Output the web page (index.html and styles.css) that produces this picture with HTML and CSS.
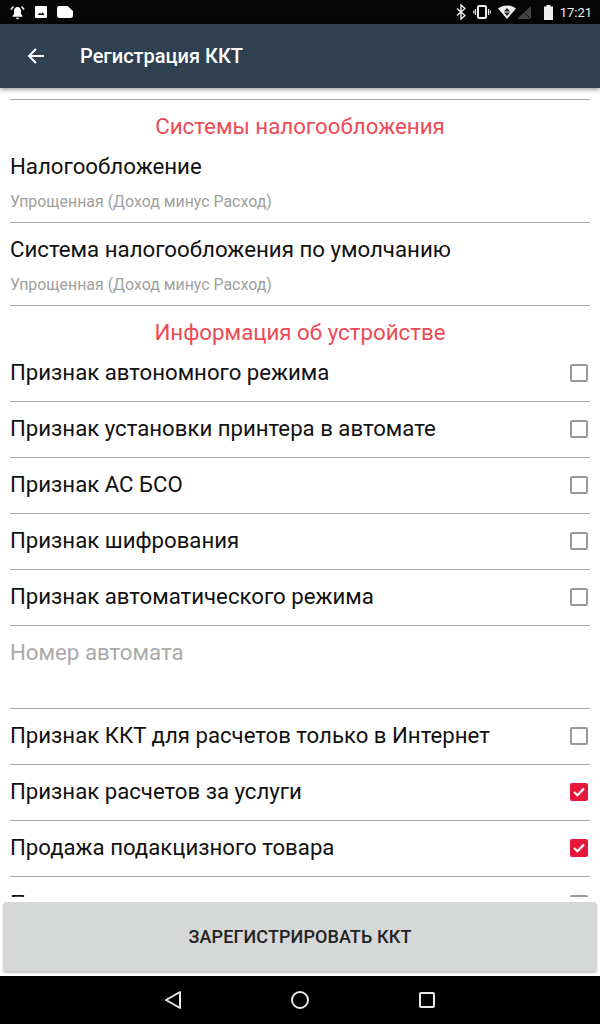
FILE: index.html
```html
<!DOCTYPE html>
<html lang="ru">
<head>
    <meta charset="UTF-8">
    <meta name="viewport" content="width=device-width, initial-scale=1.0">
    <title>Регистрация ККТ</title>
    <link rel="stylesheet" href="styles.css">
</head>
<body>
    <div class="status-bar">
        <div class="status-icons left">
            <svg width="15" height="15" viewBox="0 0 15 15"><path d="M7.500 2C5.200 2 4 3.800 4 5.800V9l-1.500 2v.7h10V11L11 9V5.800C11 3.800 9.800 2 7.500 2z" fill="#fff"/><path d="M6 12.800h3a1.500 1.500 0 0 1-3 0z" fill="#fff"/><path d="M.8 4.500L3.500 1.500M14.200 4.500L11.500 1.500" stroke="#fff" stroke-width="1.400"/></svg>
            <svg width="12" height="12" viewBox="0 0 12 12"><path d="M1 0h10a1 1 0 0 1 1 1v10a1 1 0 0 1-1 1H1a1 1 0 0 1-1-1V1a1 1 0 0 1 1-1zm1.500 9h7L7.700 6.200 6.200 8 5 6.800z" fill="#fff" fill-rule="evenodd"/></svg>
            <svg width="16" height="12" viewBox="0 0 16 12"><path d="M2 0h8.500L16 5v4.500A2.500 2.500 0 0 1 13.500 12H3a3 3 0 0 1-3-3V2a2 2 0 0 1 2-2z" fill="#fff"/></svg>
        </div>
        <div class="status-icons">
            <svg class="bt" width="10" height="16" viewBox="0 0 10 16"><path d="M1 4.500l8 7L5 15V1l4 3.500-8 7" fill="none" stroke="#eee" stroke-width="1.400"/></svg>
            <svg class="vibrate" width="18" height="14" viewBox="0 0 18 14"><rect x="5" y="1" width="8" height="12" rx="1" fill="none" stroke="#eee" stroke-width="2"/><path d="M2.500 4v6M15.500 4v6M0.700 5.500v3M17.300 5.500v3" stroke="#eee" stroke-width="1.200"/></svg>
            <svg class="wifi" width="33" height="14" viewBox="0 0 33 14"><path d="M0 3.500C5 -0.500 13 -0.500 18 3.500L9 14z" fill="#eee"/><path d="M6 6.500h6L9 3zM6 7.500h6L9 11z" fill="#222"/><path d="M33 1v13H19z" fill="#444"/><path d="M19 1l14 13" stroke="#111"/></svg>
            <svg class="battery" width="9" height="15" viewBox="0 0 9 15"><path d="M2.500 0h4v1.500H9V15H0V1.500h2.500z" fill="#eee"/></svg>
            <span class="clock">17:21</span>
        </div>
    </div>

    <header class="app-bar">
        <svg width="16" height="16" viewBox="0 0 16 16"><path d="M16 8H1.500M8 1L1 8l7 7" fill="none" stroke="#fff" stroke-width="2"/></svg>
        <h1>Регистрация ККТ</h1>
    </header>

    <main class="content">
        <h2 class="section first">Системы налогообложения</h2>
        <div class="pref">
            <div class="pref-title">Налогообложение</div>
            <div class="pref-value">Упрощенная (Доход минус Расход)</div>
        </div>
        <div class="pref">
            <div class="pref-title">Система налогообложения по умолчанию</div>
            <div class="pref-value">Упрощенная (Доход минус Расход)</div>
        </div>
        <h2 class="section">Информация об устройстве</h2>
        <div class="row"><span>Признак автономного режима</span><i class="check"></i></div>
        <div class="row"><span>Признак установки принтера в автомате</span><i class="check"></i></div>
        <div class="row"><span>Признак АС БСО</span><i class="check"></i></div>
        <div class="row"><span>Признак шифрования</span><i class="check"></i></div>
        <div class="row"><span>Признак автоматического режима</span><i class="check"></i></div>
        <div class="pref disabled">
            <div class="pref-title">Номер автомата</div>
            <div class="pref-value"></div>
        </div>
        <div class="row"><span>Признак ККТ для расчетов только в Интернет</span><i class="check"></i></div>
        <div class="row"><span>Признак расчетов за услуги</span>
            <i class="check checked"><svg width="12" height="10" viewBox="0 0 12 10"><path d="M1 5l3.500 3.300L11 1.500" fill="none" stroke="#fff" stroke-width="2.200"/></svg></i></div>
        <div class="row"><span>Продажа подакцизного товара</span>
            <i class="check checked"><svg width="12" height="10" viewBox="0 0 12 10"><path d="M1 5l3.500 3.300L11 1.500" fill="none" stroke="#fff" stroke-width="2.200"/></svg></i></div>
        <div class="row"><span>Признак</span><i class="check"></i></div>
    </main>

    <div class="footer">
        <button class="register">ЗАРЕГИСТРИРОВАТЬ ККТ</button>
    </div>

    <nav class="nav-bar">
        <svg width="18" height="20" viewBox="0 0 18 20"><path d="M16 2v16L2 10z" fill="none" stroke="#e8e8e8" stroke-width="2" stroke-linejoin="round"/></svg>
        <svg width="20" height="20" viewBox="0 0 20 20"><circle cx="10" cy="10" r="8" fill="none" stroke="#e8e8e8" stroke-width="2"/></svg>
        <svg width="18" height="18" viewBox="0 0 18 18"><rect x="2" y="2" width="14" height="14" rx="1" fill="none" stroke="#e8e8e8" stroke-width="2"/></svg>
    </nav>
</body>
</html>
```

FILE: styles.css
```css
body {
    margin: 0;
    height: 1024px;
    display: flex;
    flex-direction: column;
    overflow: hidden;
    font-family: Roboto, "Noto Sans", sans-serif;
    background-color: #fff;
}
.status-bar {
    height: 24px;
    flex: none;
    display: flex;
    justify-content: space-between;
    align-items: center;
    padding: 0 8px 0 10px;
    background-color: #050505;
}
.status-icons {
    display: flex;
    align-items: center;
}
.status-icons.left {
    gap: 10px;
}
.vibrate {
    margin-left: 7px;
}
.wifi {
    margin-left: 7px;
}
.battery {
    margin-left: 13px;
}
.clock {
    margin-left: 7px;
    color: #eee;
    font-size: 13px;
}
.app-bar {
    height: 64px;
    flex: none;
    display: flex;
    align-items: center;
    padding-left: 28px;
    background-color: #2f4050;
    box-shadow: 0 2px 4px rgba(0, 0, 0, 0.35);
    position: relative;
}
.app-bar h1 {
    margin: 0 0 0 36px;
    color: #fff;
    font-size: 20px;
    font-weight: 500;
}
.content {
    flex: 1;
    min-height: 0;
    overflow: hidden;
    padding: 11px 10px 0;
}
.section {
    margin: 0;
    padding-top: 12px;
    line-height: 28px;
    text-align: center;
    color: #ee4a55;
    font-size: 22.3px;
    font-weight: 400;
}
.section.first {
    border-top: 1px solid #aaa;
}
.pref {
    padding: 13px 0 9px;
    border-bottom: 1px solid #aaa;
}
.pref-title {
    font-size: 22.25px;
    line-height: 26px;
    color: #111;
}
.pref-value {
    margin-top: 12px;
    min-height: 22px;
    font-size: 15.9px;
    line-height: 22px;
    color: #a0a0a0;
}
.row {
    height: 55px;
    display: flex;
    justify-content: space-between;
    align-items: center;
    border-bottom: 1px solid #aaa;
    font-size: 22.2px;
    color: #111;
}
.row span {
    margin-bottom: 4px;
}
.disabled .pref-title {
    color: #aaa;
}
.check {
    width: 14px;
    height: 14px;
    margin: 0 2px 2px 0;
    border: 2px solid #999;
    border-radius: 2px;
    display: flex;
    align-items: center;
    justify-content: center;
}
.check.checked {
    background-color: #e8173a;
    border-color: #e8173a;
}
.footer {
    height: 79px;
    flex: none;
    padding: 5px 3px 0;
    box-sizing: border-box;
    background-color: #fff;
    position: relative;
}
.register {
    display: block;
    width: 100%;
    height: 69px;
    border: none;
    border-radius: 3px;
    background-color: #d6d8d8;
    box-shadow: 0 2px 2px rgba(0, 0, 0, 0.25);
    color: #222;
    font-family: inherit;
    font-size: 18px;
    font-weight: 500;
    letter-spacing: 0.1px;
}
.nav-bar {
    height: 48px;
    flex: none;
    display: flex;
    justify-content: center;
    align-items: center;
    gap: 108px;
    background-color: #000;
}
```
